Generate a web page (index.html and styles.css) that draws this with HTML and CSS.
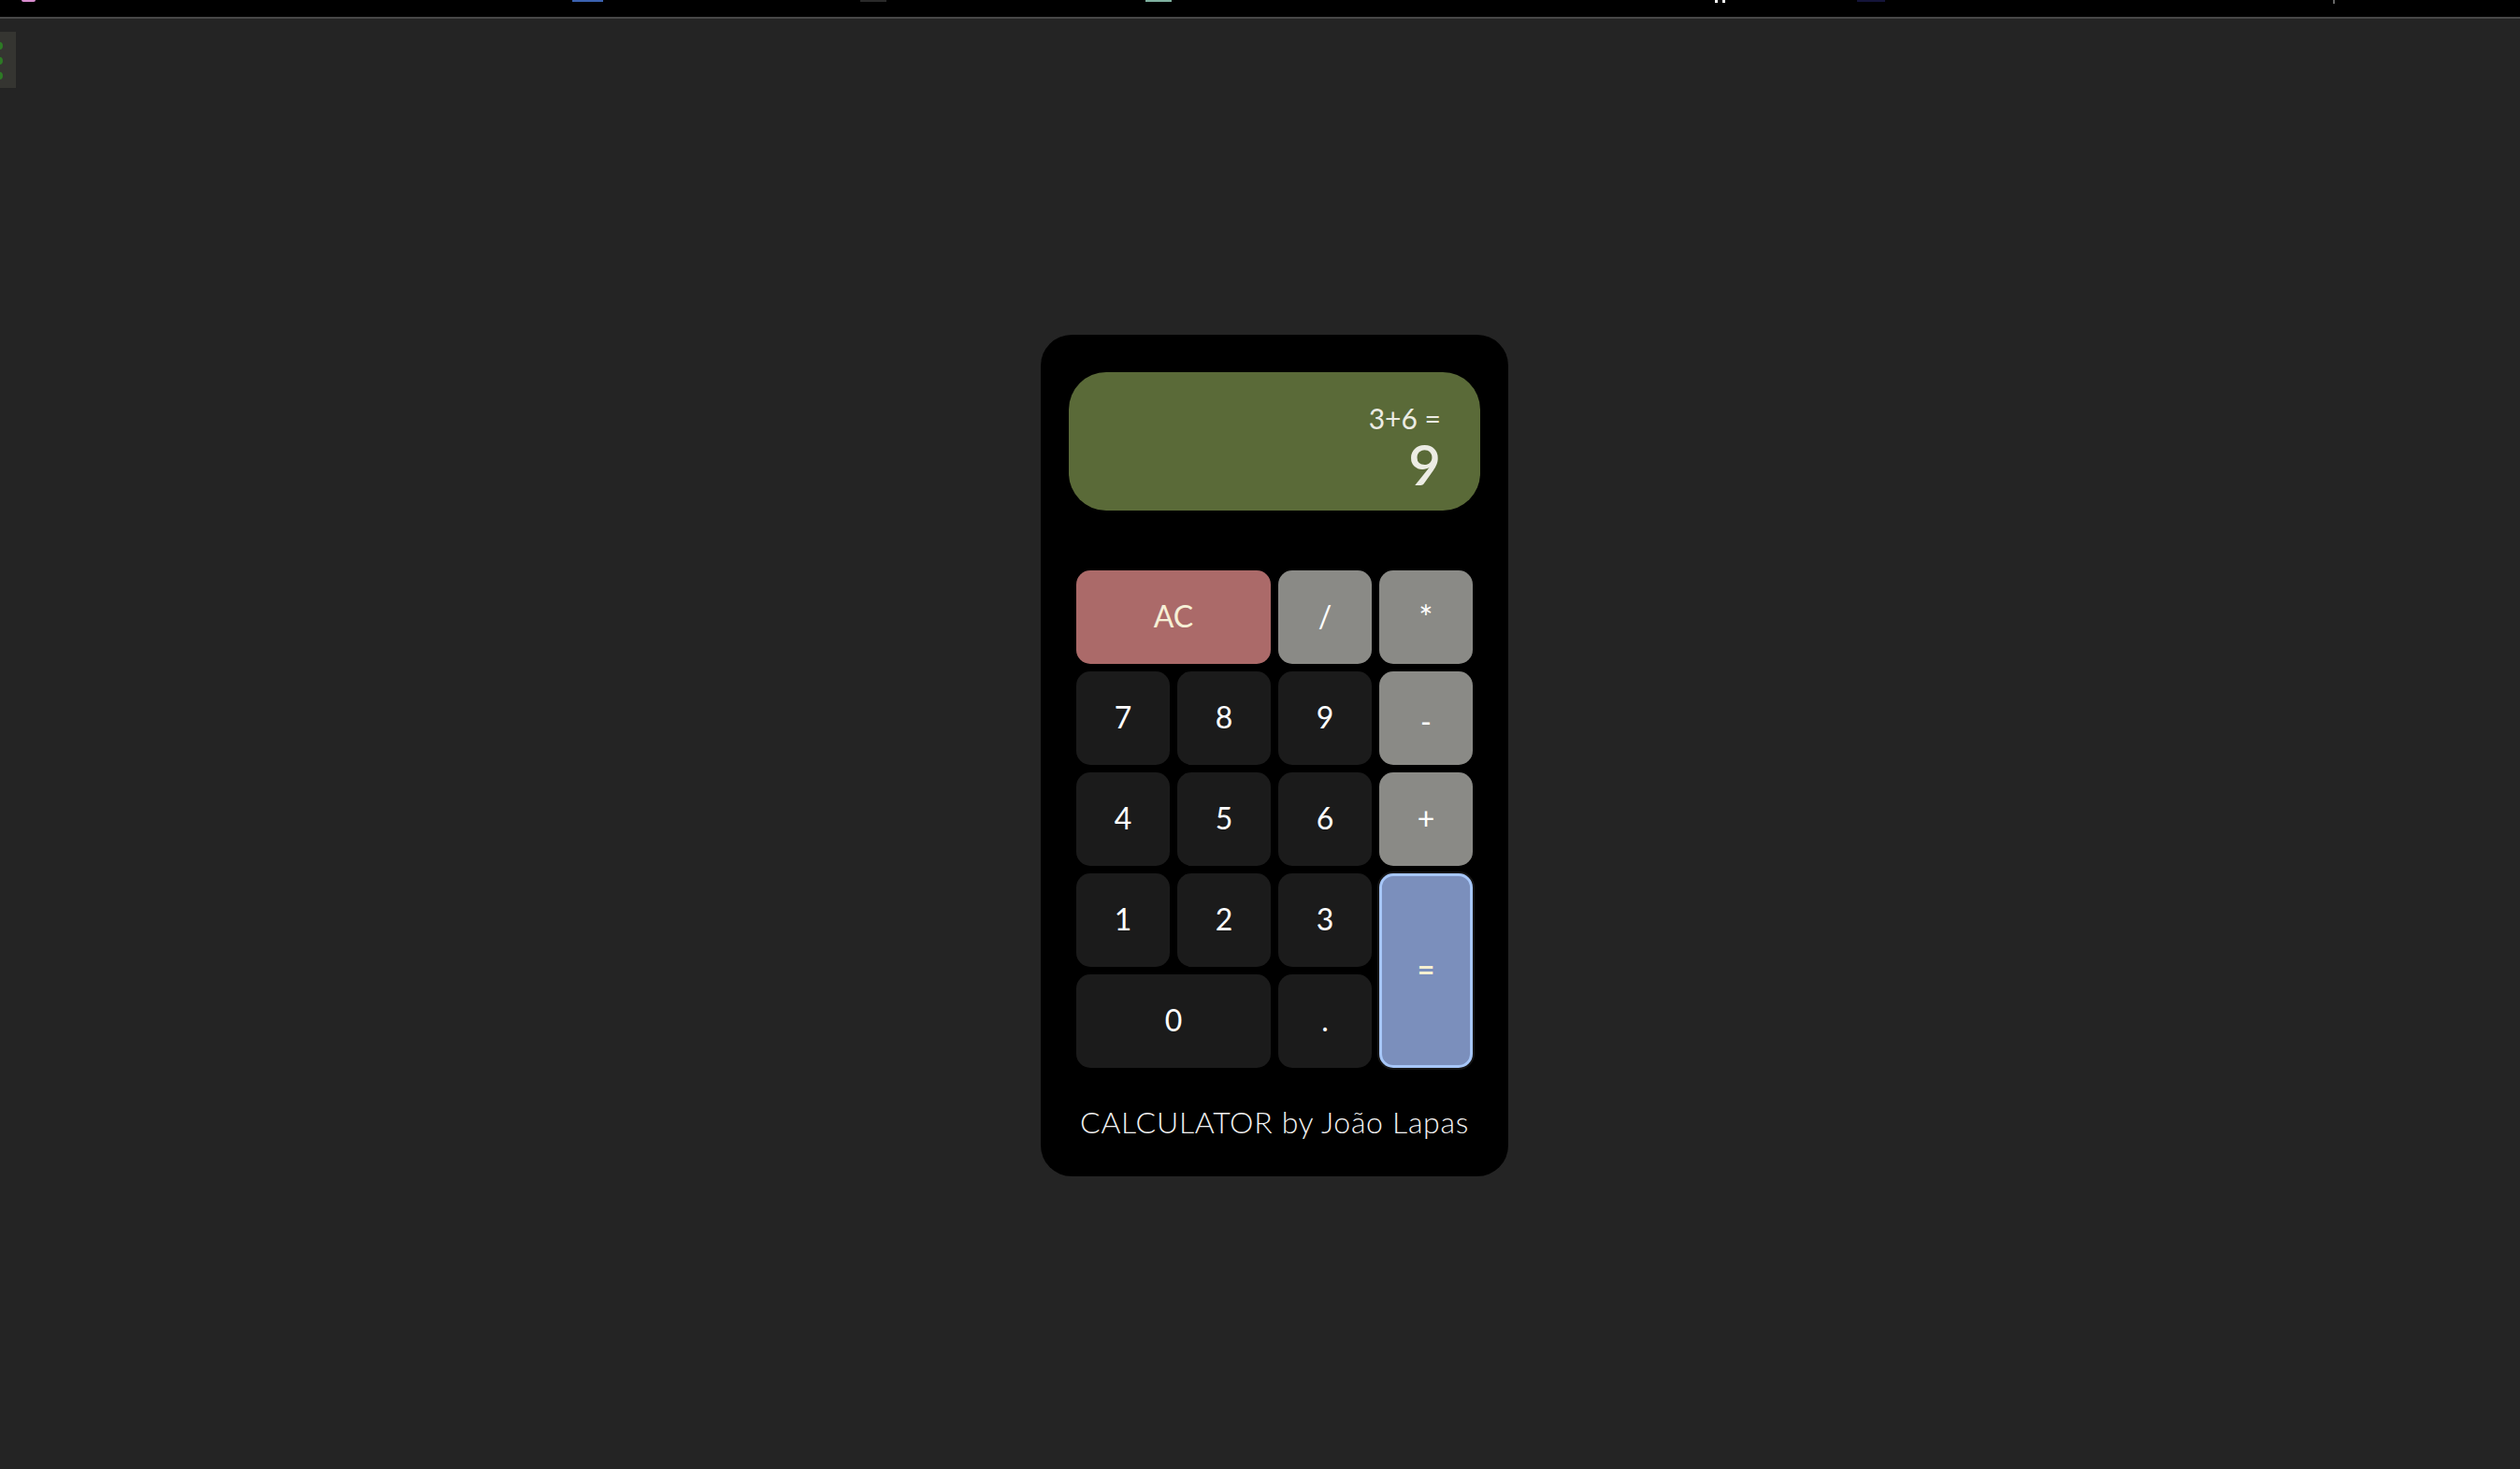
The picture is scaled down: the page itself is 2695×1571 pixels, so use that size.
FILE: index.html
```html
<!DOCTYPE html>
<html lang="en">
<head>
<meta charset="utf-8">
<title>Calculator</title>
<link rel="stylesheet" href="styles.css">
</head>
<body>
<div class="topbar">
  <span class="frag frag-pink"></span>
  <span class="frag frag-blue"></span>
  <span class="frag frag-dark"></span>
  <span class="frag frag-teal"></span>
  <span class="frag frag-white"></span>
  <span class="frag frag-navy"></span>
  <span class="frag frag-gray"></span>
</div>
<div class="side-widget">
  <span class="dot"></span>
  <span class="dot"></span>
  <span class="dot"></span>
</div>
<main class="stage">
  <div class="calculator">
    <div class="display">
      <div class="expression">3+6 =</div>
      <div class="result">9</div>
    </div>
    <div class="keys">
      <button class="key key-clear span2">AC</button>
      <button class="key key-op">/</button>
      <button class="key key-op key-star">*</button>
      <button class="key">7</button>
      <button class="key">8</button>
      <button class="key">9</button>
      <button class="key key-op key-minus">-</button>
      <button class="key">4</button>
      <button class="key">5</button>
      <button class="key">6</button>
      <button class="key key-op">+</button>
      <button class="key">1</button>
      <button class="key">2</button>
      <button class="key">3</button>
      <button class="key key-equals">=</button>
      <button class="key span2">0</button>
      <button class="key">.</button>
    </div>
    <div class="credit">CALCULATOR by João Lapas</div>
  </div>
</main>
</body>
</html>
```
FILE: styles.css
```css
html, body {
  margin: 0;
  padding: 0;
}
body {
  background: #242424;
  height: 100vh;
  overflow: hidden;
  font-family: "Lato", "Open Sans", sans-serif;
  position: relative;
}
.topbar {
  height: 18px;
  background: #000;
  border-bottom: 2px solid #474747;
  position: relative;
}
.frag {
  position: absolute;
  top: 0;
  height: 2px;
}
.frag-pink { left: 23px; width: 15px; background: #d98ccf; border-radius: 0 0 8px 8px; }
.frag-blue { left: 612px; width: 33px; background: #3b62b0; }
.frag-dark { left: 920px; width: 28px; background: #2a2a2a; }
.frag-teal { left: 1225px; width: 28px; background: #7fb0a0; }
.frag-white { left: 1834px; width: 12px; height: 3px; background: linear-gradient(90deg, #fff 0 3px, transparent 3px 8px, #fff 8px 11px, transparent 11px); }
.frag-navy { left: 1986px; width: 30px; background: #14143a; }
.frag-gray { left: 2495px; width: 2px; height: 4px; background: #666; }

.side-widget {
  position: absolute;
  left: 0;
  top: 34px;
  width: 17px;
  height: 60px;
  background: #353531;
}
.side-widget .dot {
  position: absolute;
  left: -4px;
  width: 7px;
  height: 8px;
  border-radius: 50%;
  background: #2d7a25;
}
.side-widget .dot:nth-child(1) { top: 11px; }
.side-widget .dot:nth-child(2) { top: 27px; }
.side-widget .dot:nth-child(3) { top: 43px; }

.stage {
  height: calc(100vh - 20px);
  box-sizing: border-box;
  padding: 25px 0 0 31px;
  display: flex;
  align-items: center;
  justify-content: center;
}
.calculator {
  width: 500px;
  box-sizing: border-box;
  height: 900px;
  background: #000;
  border-radius: 33px;
  padding: 40px 30px 0;
  display: flex;
  flex-direction: column;
}
.display {
  height: 148px;
  box-sizing: border-box;
  background: #5a6a38;
  border-radius: 40px;
  padding: 34px 42px 0 0;
  text-align: right;
  color: #ecece4;
}
.expression {
  font-size: 30px;
  line-height: 30px;
}
.result {
  margin-top: 4px;
  font-size: 60px;
  line-height: 60px;
  font-weight: 600;
}
.keys {
  margin: 64px 8px 0;
  display: grid;
  grid-template-columns: repeat(4, 1fr);
  grid-auto-rows: 100px;
  gap: 8px;
}
.key {
  border: none;
  border-radius: 15px;
  background: #1b1b1b;
  color: #fff;
  font-family: "Lato", "Open Sans", sans-serif;
  font-size: 32px;
  padding: 0 0 3px;
  display: flex;
  align-items: center;
  justify-content: center;
}
.span2 {
  grid-column: span 2;
}
.key-clear {
  background: #ab6a69;
  color: #f6f0d6;
}
.key-op {
  background: #8a8a86;
  color: #fff;
}
.key-star {
  font-size: 36px;
  padding-bottom: 0;
}
.key-minus {
  padding: 6px 0 0;
}
.key-equals {
  grid-row: span 2;
  background: #7b8fbc;
  color: #f6f0d0;
  font-weight: 700;
  border: 3px solid #a6c6f8;
  box-shadow: 0 0 0 2px #161616;
}
.credit {
  margin-top: 38px;
  text-align: center;
  color: #f2f2f2;
  font-size: 32px;
  font-weight: 300;
  letter-spacing: 0.7px;
  line-height: 40px;
}
```
